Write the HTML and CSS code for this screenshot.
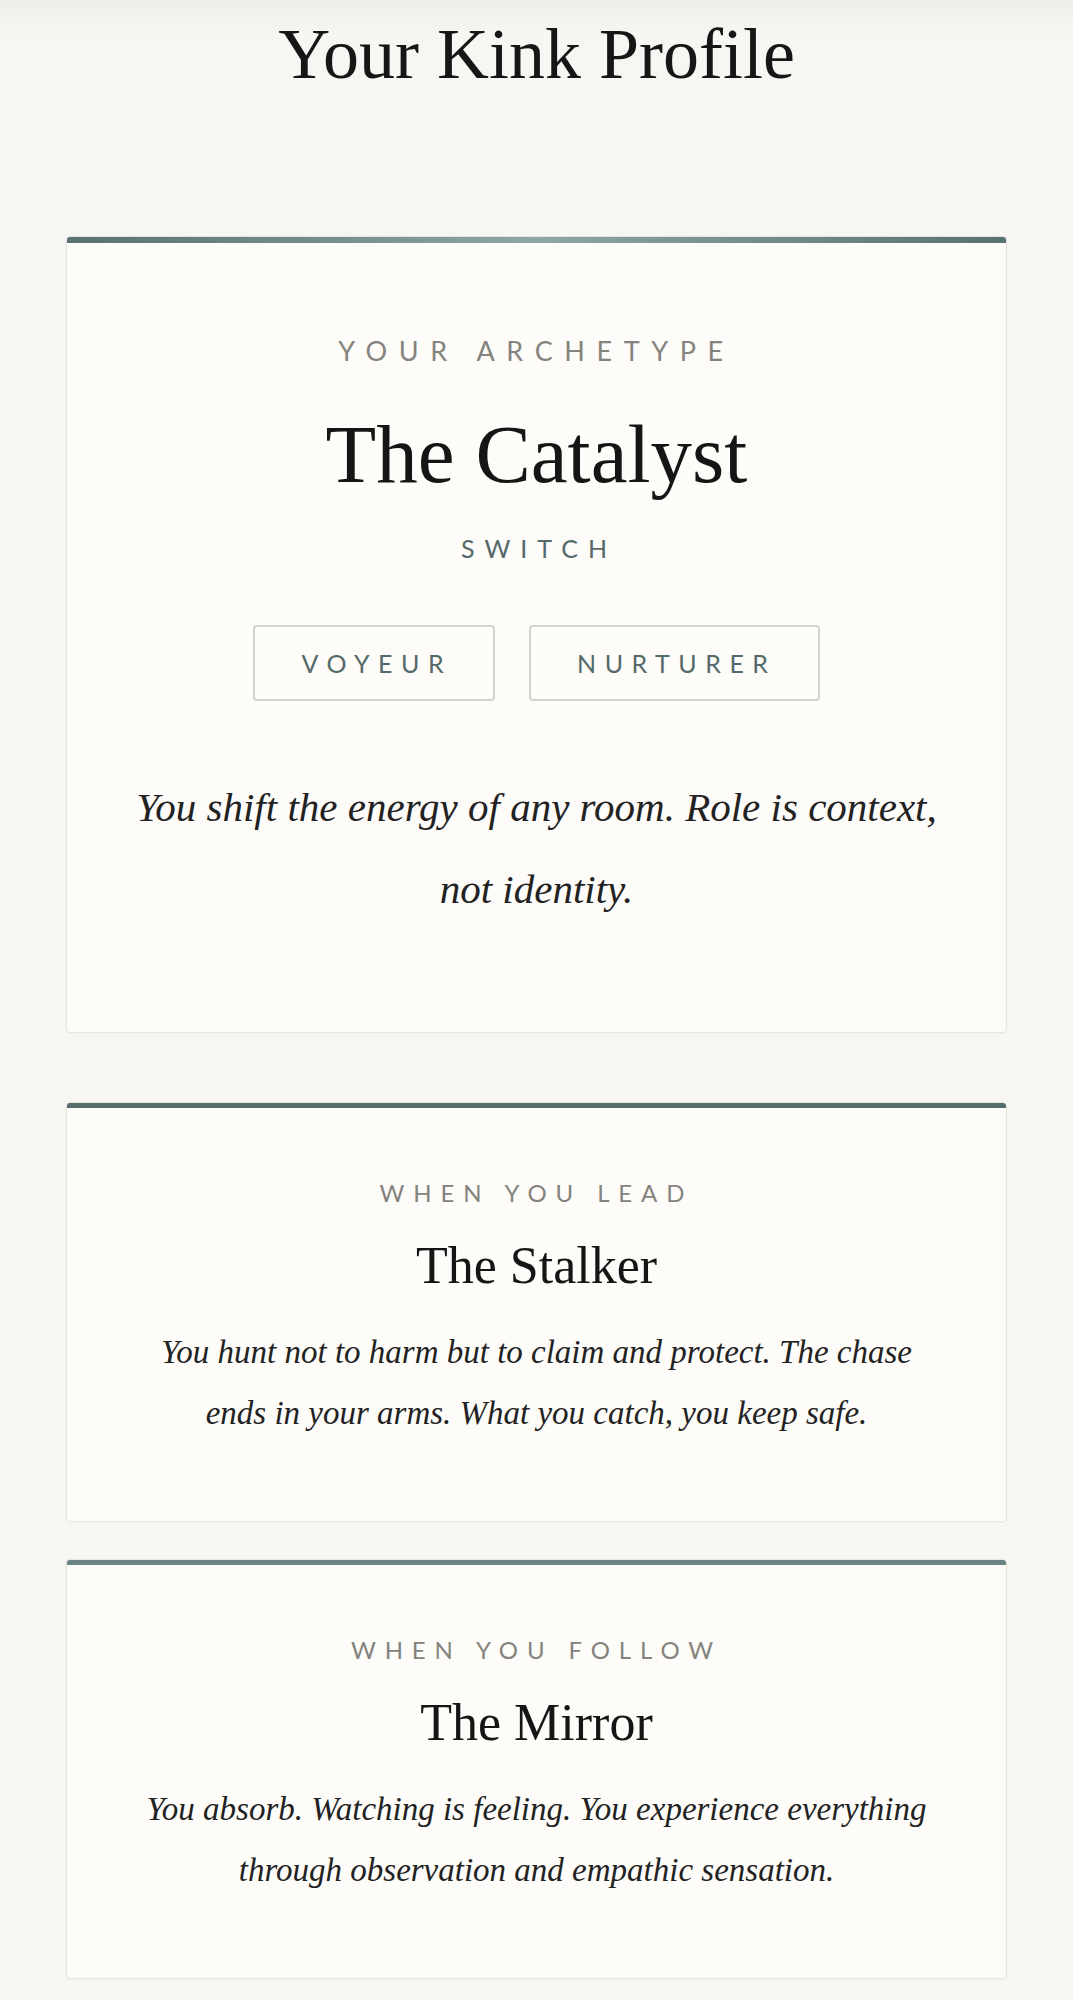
FILE: index.html
```html
<!DOCTYPE html>
<html lang="en">
<head>
<meta charset="utf-8">
<title>Your Kink Profile</title>
<link rel="stylesheet" href="styles.css">
</head>
<body>
<header class="page-header">
  <h1 class="page-title">Your Kink Profile</h1>
</header>
<main class="profile">
  <section class="card card-main">
    <div class="card-bar bar-gradient"></div>
    <div class="card-body body-main">
      <p class="label label-main">Your Archetype</p>
      <h2 class="archetype">The Catalyst</h2>
      <p class="role">Switch</p>
      <div class="tags">
        <span class="tag">Voyeur</span>
        <span class="tag">Nurturer</span>
      </div>
      <p class="desc desc-main">You shift the energy of any room. Role is context, not identity.</p>
    </div>
  </section>
  <section class="card card-sub">
    <div class="card-bar bar-dark"></div>
    <div class="card-body body-sub">
      <p class="label">When You Lead</p>
      <h3 class="sub-title">The Stalker</h3>
      <p class="desc">You hunt not to harm but to claim and protect. The chase ends in your arms. What you catch, you keep safe.</p>
    </div>
  </section>
  <section class="card card-sub">
    <div class="card-bar bar-light"></div>
    <div class="card-body body-sub">
      <p class="label">When You Follow</p>
      <h3 class="sub-title">The Mirror</h3>
      <p class="desc">You absorb. Watching is feeling. You experience everything through observation and empathic sensation.</p>
    </div>
  </section>
</main>
</body>
</html>
```

FILE: styles.css
```css
* { box-sizing: border-box; }

html, body {
  margin: 0;
  padding: 0;
  background: #f8f6f2;
  color: #1b1b1b;
  font-family: "Liberation Serif", "Times New Roman", serif;
}

.page-header {
  padding-top: 9px;
  background: linear-gradient(to bottom, rgba(0,0,0,0.035) 0px, rgba(0,0,0,0) 36px);
}

.page-title {
  margin: 0;
  font-weight: 400;
  font-size: 72px;
  line-height: 90px;
  text-align: center;
  color: #161616;
}

.profile {
  padding: 137px 66px 40px;
  display: flex;
  flex-direction: column;
}

.card {
  background: #fdfcf9;
  border: 1px solid #e8e5df;
  border-radius: 4px;
  box-shadow: 0 1px 2px rgba(0,0,0,0.03);
  overflow: hidden;
  text-align: center;
}

.card-main { margin-bottom: 69px; }
.card-sub + .card-sub { margin-top: 37px; }

.card-bar {
  margin: -1px -1px 0;
  height: 7px;
}
.card-sub .card-bar { height: 6px; }

.bar-gradient { background: linear-gradient(to right, #587272 0%, #7b9695 35%, #8fa7a6 50%, #7b9695 65%, #587272 100%); }
.bar-dark { background: #546d6c; }
.bar-light { background: #698483; }

.card-body { display: flex; flex-direction: column; align-items: center; }
.body-main { padding: 92px 60px 102px; }
.body-sub { padding: 71px 70px 77px; }

.label {
  margin: 0;
  font-family: "Lato", "Liberation Sans", sans-serif;
  font-size: 24px;
  line-height: 28px;
  letter-spacing: 0.37em;
  text-transform: uppercase;
  color: #85837d;
}
.label-main {
  font-size: 27px;
  line-height: 32px;
  letter-spacing: 0.43em;
}

.archetype {
  margin: 39px 0 0;
  font-weight: 400;
  font-size: 83px;
  line-height: 96px;
  color: #151515;
}

.role {
  margin: 33px 0 0;
  font-family: "Lato", "Liberation Sans", sans-serif;
  font-size: 25px;
  line-height: 27px;
  letter-spacing: 0.4em;
  padding-left: 0.2em;
  text-transform: uppercase;
  color: #55696a;
}

.tags {
  margin-top: 63px;
  display: flex;
  gap: 34px;
  justify-content: center;
}

.tag {
  display: block;
  border: 2px solid #cdd4d2;
  border-radius: 4px;
  padding: 23px 41px 23px 46px;
  font-family: "Lato", "Liberation Sans", sans-serif;
  font-size: 25px;
  line-height: 26px;
  letter-spacing: 0.34em;
  text-transform: uppercase;
  color: #55696a;
}

.desc {
  margin: 24px 0 0;
  font-style: italic;
  font-size: 33px;
  line-height: 61px;
  color: #222;
}
.desc-main {
  margin-top: 65px;
  font-size: 41px;
  line-height: 82px;
}

.sub-title {
  margin: 27px 0 0;
  font-weight: 400;
  font-size: 52px;
  line-height: 64px;
  color: #151515;
}
```
